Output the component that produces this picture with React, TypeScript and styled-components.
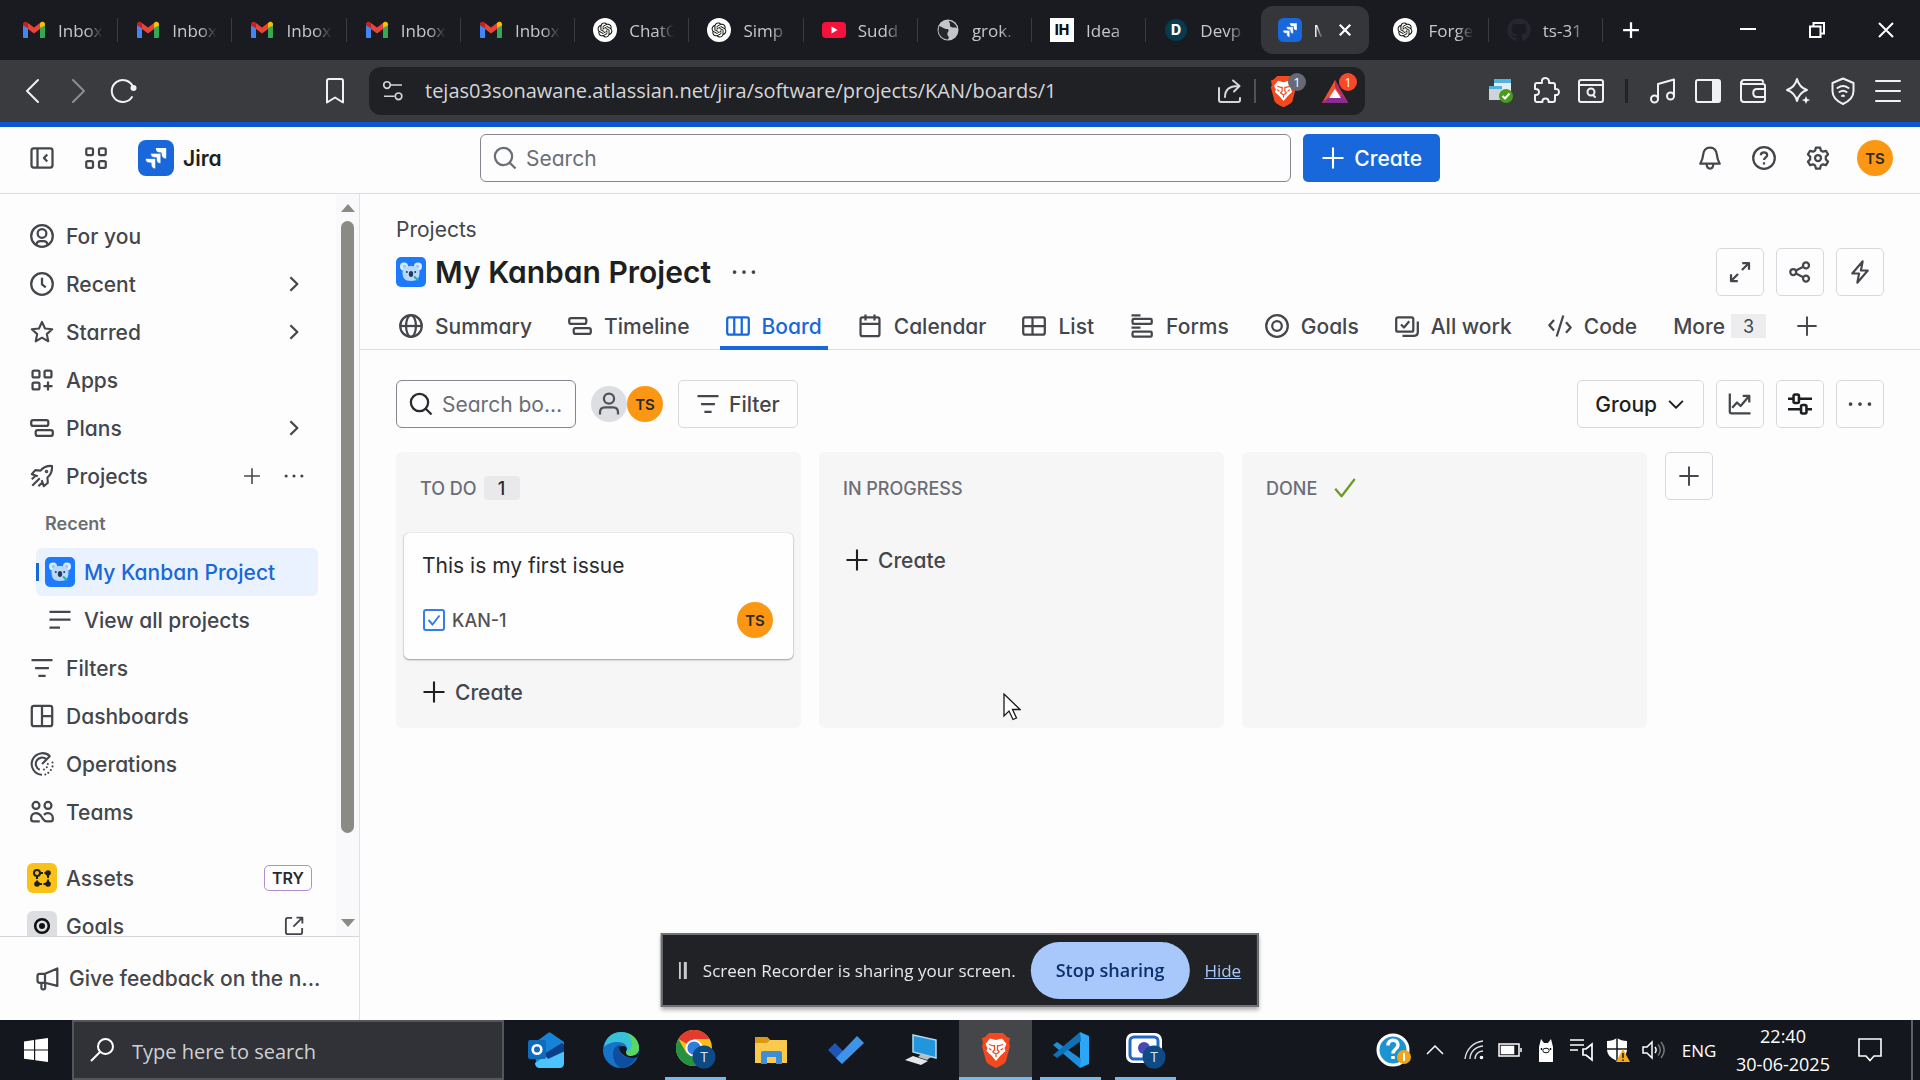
import React from "react";
import styled, { createGlobalStyle, css } from "styled-components";
import { RiOpenaiFill } from "react-icons/ri";
import { FaGithub } from "react-icons/fa";

const jiraFont = `Inter, "Liberation Sans", sans-serif`;
const osFont = `"Open Sans", "Noto Sans", sans-serif`;

const Global = createGlobalStyle`
  *, *::before, *::after { box-sizing: border-box; }
  html, body { margin: 0; padding: 0; }
  body { font-family: ${jiraFont}; font-feature-settings: "cv11"; color: #292a2e; background: #fdfdfe; }
  button, input { font: inherit; font-feature-settings: inherit; color: inherit; }
  button { border: 0; padding: 0; background: none; cursor: pointer; }
  h1, h2, h3, p { margin: 0; }
  a { color: inherit; text-decoration: none; }
  svg { display: block; flex: none; }
`;

/* ---------- icons ---------- */

type IconProps = { size?: number; sw?: number; children: React.ReactNode };
const Icon = ({ size = 24, sw = 1.5, children }: IconProps) => (
  <svg width={size} height={size} viewBox="0 0 16 16" fill="none" stroke="currentColor" strokeWidth={sw} strokeLinejoin="round" aria-hidden="true">
    {children}
  </svg>
);

const PlusIcon = ({ size = 24, sw = 1.4 }) => <Icon size={size} sw={sw}><path d="M8 1v14M1 8h14" /></Icon>;
const DotsIcon = ({ size = 24 }) => (
  <Icon size={size}><g fill="currentColor" stroke="none"><circle cx="1.7" cy="8" r="1.25" /><circle cx="8" cy="8" r="1.25" /><circle cx="14.3" cy="8" r="1.25" /></g></Icon>
);
const SearchIcon = ({ size = 24 }) => <Icon size={size}><circle cx="7" cy="7" r="5.75" /><path d="M11 11l4 4" /></Icon>;
const ChevronRight = () => <Icon size={24}><path d="M5.6 3.5L10.2 8l-4.6 4.5" /></Icon>;
const ChevronDown = () => <Icon size={20}><path d="M2.5 5.5L8 11l5.5-5.5" /></Icon>;
const PersonCircle = () => <Icon><circle cx="8" cy="8" r="7.2" /><circle cx="8" cy="6.3" r="2.9" /><path d="M4.2 14c.2-1.7 1.3-2.6 2.8-2.6h2c1.5 0 2.6.9 2.8 2.6" /></Icon>;
const ClockIcon = () => <Icon><circle cx="8" cy="8" r="7.2" /><path d="M8 3.8V8.300l2.500 1.900" /></Icon>;
const StarIcon = () => <Icon sw={1.4}><path d="M8 1.3l2 4.4 4.8.5-3.6 3.2 1 4.8L8 11.8l-4.200 2.400 1-4.800L1.200 6.200 6 5.700z" /></Icon>;
const AppsIcon = () => <Icon><rect x="1.7" y="1.7" width="4.6" height="4.6" rx="1" /><rect x="9.7" y="1.7" width="4.6" height="4.6" rx="1" /><rect x="1.7" y="9.7" width="4.6" height="4.6" rx="1" /><path d="M12 9v6M9 12h6" /></Icon>;
const SwitcherIcon = () => <Icon><rect x="1.5" y="1.5" width="4.5" height="4.5" rx="1" /><rect x="10" y="1.5" width="4.5" height="4.5" rx="1" /><rect x="1.5" y="10" width="4.5" height="4.5" rx="1" /><rect x="10" y="10" width="4.5" height="4.5" rx="1" /></Icon>;
const TimelineIcon = () => <Icon><rect x=".8" y="2.7" width="11.4" height="3.9" rx="1.3" /><rect x="3.8" y="9.4" width="11.4" height="3.9" rx="1.3" /></Icon>;
const RocketIcon = () => <Icon sw={1.4}><path d="M5.2 8.2L1.2 6.800l2.300-2.700 3.500.3C9 2 11.500 1.100 14.700 1.300c.2 3.200-.7 5.700-3.100 7.700l.3 3.500-2.700 2.300-1.400-4M1.500 14.500l5-5M1.200 10.200l2.200-2M5.600 14.800l2.200-2.200" /><circle cx="11" cy="5" r=".5" /></Icon>;
const ListLinesIcon = () => <Icon><path d="M1 2.5h14M1 7.8h14M1 13h7" /></Icon>;
const FilterIcon = () => <Icon><path d="M1 2.8h14M3.4 8h9.2M5.6 13.2h4.8" /></Icon>;
const DashIcon = () => <Icon><rect x="1.2" y="1.2" width="13.6" height="13.6" rx="1.5" /><path d="M8 1.2v13.6M8 8h6.8" /></Icon>;
const OpsIcon = () => (
  <Icon sw={1.4}>
    <path d="M13.300 2.800A7.200 7.200 0 1 0 8 15.200M11 4.900a4.200 4.200 0 1 0-4.500 6.900M13.500 2.500L8 8" />
    <g fill="currentColor" stroke="none">
      <circle cx="15" cy="7" r=".7" /><circle cx="15" cy="9.600" r=".7" /><circle cx="13.900" cy="12" r=".7" /><circle cx="12.200" cy="13.900" r=".7" /><circle cx="10.200" cy="15" r=".7" />
      <circle cx="11.900" cy="8" r=".7" /><circle cx="11.200" cy="10.200" r=".7" /><circle cx="9.300" cy="11.700" r=".7" />
    </g>
  </Icon>
);
const TeamsIcon = () => <Icon><circle cx="4" cy="3.6" r="2.3" /><circle cx="12" cy="3.6" r="2.3" /><path d="M6.500 14.200H2.300C1.300 14.200.8 13.700.8 13v-1C.8 9.900 2.300 8.800 4 8.800s2.700.8 3.600 2.200l1 1.600c.7 1.100 1.400 1.600 2.600 1.600h2.500c1 0 1.500-.5 1.500-1.200v-1c0-2-1.500-3.200-3.200-3.200-1.200 0-2 .4-2.700 1.100" /></Icon>;
const ExternalIcon = () => <Icon size={20}><path d="M6.5 1.5H3c-1 0-1.5.5-1.5 1.5v10c0 1 .5 1.5 1.500 1.500h10c1 0 1.500-.5 1.500-1.500V9.500M10 1.300h4.700V6M14.500 1.500l-7 7" /></Icon>;
const MegaphoneIcon = () => <Icon><path d="M6 4.500L14.200 1v11.600L6 10.500M6 4.500H2.500c-1 0-1.500.5-1.500 1.500v3c0 1 .5 1.500 1.500 1.500H6zM3.600 10.500V14c0 .5.3.9.8.9h.9c.5 0 .8-.4.8-.9v-3.500" /></Icon>;
const SidebarIcon = () => <Icon><rect x="1" y="1.6" width="14" height="12.8" rx="1.5" /><path d="M5 1.6v12.8M11.5 5.700L9.300 8l2.200 2.300" /></Icon>;
const BellIcon = () => <Icon><path d="M8 1c2.700 0 4.300 2 4.500 4.500.2 2.600.7 4 2 6.300h-13c1.300-2.300 1.800-3.700 2-6.300C3.700 3 5.300 1 8 1zM5.800 12c0 2 .9 3 2.200 3s2.200-1 2.200-3" /></Icon>;
const HelpIcon = () => <Icon><circle cx="8" cy="8" r="7.2" /><path d="M5.900 6.200c0-1.300.9-2 2.100-2s2.100.8 2.100 1.900C10.100 7.500 8 7.600 8 9.400M8 10.800v1.500" /></Icon>;
const GearIcon = () => <Icon><path d="M6.600 1h2.800l.5 2 1.400.8 2-.6 1.400 2.400-1.500 1.500v1.800l1.500 1.500-1.400 2.400-2-.6-1.400.8-.5 2H6.600l-.5-2-1.400-.8-2 .6-1.400-2.400 1.500-1.500V7.100L1.300 5.600l1.400-2.400 2 .6L6.100 3z" /><circle cx="8" cy="8" r="2" /></Icon>;
const GlobeIcon = () => <Icon><circle cx="8" cy="8" r="7.2" /><ellipse cx="8" cy="8" rx="3.3" ry="7.2" /><path d="M.8 8h14.4" /></Icon>;
const BoardIcon = () => <Icon><rect x=".8" y="2.2" width="14.4" height="11.6" rx="1.3" /><path d="M5.5 2.2v11.6M10.5 2.2v11.6" /></Icon>;
const CalendarIcon = () => <Icon><rect x="1.7" y="2.2" width="12.6" height="12.6" rx="1.3" /><path d="M1.7 6.6h12.6M5 .3v4M11 .3v4" /></Icon>;
const TableIcon = () => <Icon><rect x=".8" y="2.2" width="14.4" height="11.6" rx="1.3" /><path d="M7 2.2v11.6M.8 8h14.4" /></Icon>;
const FormsIcon = () => <Icon><path d="M1 .9h6M1 9h6" /><rect x="1.7" y="3.3" width="12.8" height="3.3" rx=".8" /><rect x="1.7" y="11.8" width="12.8" height="3.3" rx=".8" /></Icon>;
const TargetIcon = () => <Icon><circle cx="8" cy="8" r="7.2" /><circle cx="8" cy="8" r="3.2" /></Icon>;
const AllWorkIcon = () => <Icon><rect x=".8" y="2.2" width="11.4" height="9.6" rx="1.2" /><path d="M4 7l2 2 3.500-4.200M15.200 5v7.200c0 1.500-.8 2.300-2.300 2.300H5" /></Icon>;
const CodeIcon = () => <Icon><path d="M4 4L.9 7.500 4 11M12 5.500L15.100 9 12 12.500M10.200 1L5.800 15" /></Icon>;
const ExpandIcon = () => <Icon><path d="M9.500 2H14v4.500M14 2L9.300 6.700M6.500 14H2V9.500M2 14l4.700-4.700" /></Icon>;
const ShareIcon = () => <Icon><circle cx="3.5" cy="8" r="2" /><circle cx="12" cy="3.6" r="2" /><circle cx="12" cy="12.4" r="2" /><path d="M5.300 7l4.900-2.500M5.300 9l4.900 2.500" /></Icon>;
const BoltIcon = () => <Icon sw={1.4}><path d="M9.800.8L2.800 9h4.600l-1.200 6.200L13.200 7H8.600z" /></Icon>;
const ChartIcon = () => <Icon><path d="M1.200 1v12c0 .8.4 1.200 1.200 1.200H15M2.800 10.500L6 7l2.400 2.300L13.800 3M9.800 2.600h4.400V7" /></Icon>;
const SlidersIcon = () => <Icon sw={1.7}><path d="M0 4.500h3.500M8 4.500h8M0 11.500h8M12.500 11.500H16" /><rect x="3.7" y="1.7" width="3.6" height="5.6" rx="1" /><rect x="8.7" y="8.7" width="3.6" height="5.6" rx="1" /></Icon>;
const CheckIcon = () => <Icon><path d="M1.500 8.500l4.200 5L14.500 2" stroke="#6a9a23" /></Icon>;
const PersonIcon = () => <Icon><circle cx="8" cy="4.4" r="3.4" /><path d="M2 15v-1.500c0-2 1.300-3.300 3.300-3.300h5.400c2 0 3.300 1.300 3.300 3.300V15" /></Icon>;

const JiraLogo = ({ size }: { size: number }) => (
  <svg width={size} height={size} viewBox="0 0 36 36" aria-hidden="true">
    <rect width="36" height="36" rx="8" fill="#1868db" />
    <g fill="#fff">
      <path d="M17.800 8h10.400v10.500c-3 0-4.600-2-4.600-4.500v-1.500h-1.500c-2.500 0-4.300-1.500-4.300-4.500z" />
      <path d="M12.500 13.200h10.400v10.500c-3 0-4.600-2-4.600-4.500v-1.500h-1.500c-2.500 0-4.300-1.500-4.300-4.500z" stroke="#1868db" strokeWidth=".8" />
      <path d="M7.300 18.400h10.400v10.500c-3 0-4.600-2-4.600-4.500v-1.500h-1.500c-2.500 0-4.300-1.500-4.300-4.500z" stroke="#1868db" strokeWidth=".8" />
    </g>
  </svg>
);

const Koala = () => (
  <svg width="30" height="30" viewBox="0 0 30 30" aria-hidden="true">
    <rect width="30" height="30" rx="5" fill="#1d7afc" />
    <circle cx="8" cy="9.500" r="4" fill="#dcebff" /><circle cx="22" cy="9.500" r="4" fill="#dcebff" />
    <circle cx="8.500" cy="9.500" r="1.800" fill="#9cc8ff" /><circle cx="21.500" cy="9.500" r="1.800" fill="#9cc8ff" />
    <path d="M6.500 15c0-4 4-6 8.500-6s8.500 2 8.500 6c0 6-2 9-8.500 9s-8.500-3-8.500-9z" fill="#b9d9fb" />
    <ellipse cx="15" cy="17" rx="2.200" ry="3" fill="#22395c" />
    <circle cx="10.800" cy="15" r="1" fill="#22395c" /><circle cx="19.200" cy="15" r="1" fill="#22395c" />
    <path d="M18 19.500l4.500 4" stroke="#1fb49a" strokeWidth="2" />
  </svg>
);

const Gmail = () => (
  <svg width="24" height="24" viewBox="0 0 24 24" aria-hidden="true">
    <path d="M1 5.500V19c0 .7.5 1 1 1h4V10z" fill="#4285f4" />
    <path d="M23 5.500V19c0 .7-.5 1-1 1h-4V10z" fill="#34a853" />
    <path d="M18 10V5l1.200-.9C21 3 23 4 23 6v1.500z" fill="#fbbc04" />
    <path d="M6 10V5L4.800 4.100C3 3 1 4 1 6v1.500z" fill="#c5221f" />
    <path d="M6 5l6 4.500L18 5v6l-6 4.500L6 11z" fill="#ea4335" />
  </svg>
);
const GptIcon = () => (
  <svg width="24" height="24" viewBox="0 0 24 24" aria-hidden="true">
    <circle cx="12" cy="12" r="12" fill="#fff" />
    <RiOpenaiFill x="3" y="3" size={18} color="#111" />
  </svg>
);
const YouTube = () => (
  <svg width="24" height="24" viewBox="0 0 24 24" aria-hidden="true"><rect y="4" width="24" height="16" rx="4" fill="#f5123c" /><path d="M9.500 8.500l6 3.500-6 3.500z" fill="#fff" /></svg>
);
const WorldIcon = () => (
  <svg width="24" height="24" viewBox="0 0 24 24" aria-hidden="true">
    <circle cx="12" cy="12" r="10.500" fill="#c3c5c8" />
    <path d="M3 8c4 1 5 3 8 3 2 0 2 2 1 3s-1 4 1 5l-1 2.500C6 21 3 17 2.500 13zM13 4c2 2 0 4 2 5s4 0 6 1c-1-4-4-6.500-8-7z" fill="#26272b" />
  </svg>
);
const LetterIcon = ({ round = false, bg, fg, children }: { round?: boolean; bg: string; fg: string; children: string }) => (
  <svg width="24" height="24" viewBox="0 0 24 24" aria-hidden="true">
    {round ? <circle cx="12" cy="12" r="11" fill={bg} /> : <rect width="24" height="24" fill={bg} />}
    <text x="12" y="17" textAnchor="middle" fontFamily="Inter, sans-serif" fontWeight="800" fontSize="14" fill={fg}>{children}</text>
  </svg>
);
const BraveIcon = ({ size = 28 }) => (
  <svg width={size} height={size * 1.2} viewBox="0 0 30 36" aria-hidden="true">
    <path d="M8 1h14l4 4 3 1-1 5 1 3-4 15c-1 3-7 5.500-10 7-3-1.500-9-4-10-7L1 14l1-3-1-5 3-1z" fill="#f4491f" />
    <path d="M9 6.500l6 1.500 6-1.500 4.500 5.500-2 4 1 3-5 4.500L15 29l-4.500-5.500-5-4.500 1-3-2-4z" fill="#fff" />
    <path d="M8 12.500l5 1.500M22 12.500L17 14M13.500 13v5l-2 2M16.500 13v5l2 2M11.500 20l3.500 2 3.500-2M15 22v3M8 16.500l2.500 1.500M22 16.500L19.500 18" stroke="#f4491f" strokeWidth="1.300" fill="none" />
  </svg>
);

/* ---------- browser chrome ---------- */

const Desktop = styled.div`
  display: flex;
  flex-direction: column;
  height: 100vh;
  min-width: 1280px;
  overflow: hidden;
`;
const TabStrip = styled.div`
  flex: none;
  display: flex;
  align-items: center;
  height: 60px;
  padding-left: 4px;
  background: #191b20;
  color: #c6c8cc;
  font-family: ${osFont};
  font-size: 17px;
`;
const Tabs = styled.div`
  flex: 1;
  min-width: 0;
  display: flex;
`;
const Tab = styled.button<{ $active?: boolean; $bare?: boolean }>`
  flex: 1 1 0;
  min-width: 0;
  height: 48px;
  display: flex;
  align-items: center;
  gap: 12px;
  padding: 0 14px 0 18px;
  position: relative;
  ${(p) => !p.$bare && !p.$active && css`
    &::after {
      content: "";
      position: absolute;
      right: 0;
      top: 12px;
      height: 24px;
      width: 1px;
      background: #3a3c40;
    }
  `}
  ${(p) => p.$active && css`
    flex: 0 0 108px;
    background: #34363a;
    border-radius: 12px;
    color: #fff;
    margin-right: 6px;
    padding: 0 17px;
  `}
`;
const TabTitle = styled.span<{ $short?: boolean }>`
  flex: 1;
  min-width: 0;
  text-align: left;
  white-space: nowrap;
  overflow: hidden;
  mask-image: linear-gradient(90deg, #000 ${(p) => (p.$short ? "20%" : "60%")}, transparent ${(p) => (p.$short ? "70%" : "98%")});
`;
const WindowControls = styled.div`
  flex: none;
  width: 317px;
  display: flex;
  align-items: center;
  color: #fff;
`;
const WinBtn = styled.button`
  width: 69px;
  height: 48px;
  display: grid;
  place-items: center;
`;
const NewTab = styled(WinBtn)`
  width: 56px;
  margin-right: auto;
`;
const Toolbar = styled.div`
  flex: none;
  height: 62px;
  display: flex;
  align-items: center;
  background: #393b3e;
  color: #f0f1f2;
`;
const NavGroup = styled.div`
  flex: 0 0 369px;
  display: flex;
  align-items: center;
  gap: 12px;
  padding: 0 18px 0 16px;
`;
const ToolBtn = styled.button<{ $dim?: boolean; $end?: boolean }>`
  width: 33px;
  height: 36px;
  display: grid;
  place-items: center;
  opacity: ${(p) => (p.$dim ? 0.45 : 1)};
  margin-left: ${(p) => (p.$end ? "auto" : "0")};
`;
const AddressBar = styled.div`
  flex: 1;
  min-width: 0;
  height: 48px;
  display: flex;
  align-items: center;
  padding: 0 8px 0 12px;
  border-radius: 12px;
  background: #1f2125;
  color: #d5d6d9;
`;
const Url = styled.input`
  flex: 1;
  min-width: 0;
  margin-left: 20px;
  padding: 0 0 2px;
  border: 0;
  outline: 0;
  background: none;
  font-family: ${osFont};
  font-size: 20px;
`;
const BarRule = styled.span`
  width: 2px;
  height: 24px;
  margin: 0 14px 0 8px;
  background: #505257;
`;
const Badged = styled.button`
  position: relative;
  width: 36px;
  height: 36px;
  display: grid;
  place-items: center start;
  & + & { margin-left: 15px; }
`;
const Count = styled.span<{ $hot?: boolean }>`
  position: absolute;
  top: 0;
  right: 0;
  min-width: 18px;
  height: 18px;
  border-radius: 9px;
  background: ${(p) => (p.$hot ? "#f9472a" : "#656a75")};
  color: #fff;
  font: 13px/18px ${osFont};
  text-align: center;
`;
const Extensions = styled.div`
  flex: 0 0 555px;
  display: flex;
  justify-content: flex-end;
  align-items: center;
  gap: 12px;
  padding-right: 16px;
`;
const ExtRule = styled.span`
  width: 3px;
  height: 24px;
  margin: 0 6px;
  background: #222327;
`;

/* ---------- jira ---------- */

const Page = styled.div`
  flex: 1;
  min-height: 0;
  display: flex;
  flex-direction: column;
  border-top: 5px solid #0b57d0;
  background: #fdfdfe;
`;
const TopNav = styled.header`
  flex: none;
  height: 67px;
  display: grid;
  grid-template-columns: 1fr minmax(0, 960px) 1fr;
  align-items: center;
  padding-bottom: 4px;
  border-bottom: 1px solid #dcdde3;
  color: #44464b;
`;
const NavLeft = styled.div`
  display: flex;
  align-items: center;
  gap: 30px;
  padding-left: 30px;
`;
const Brand = styled.a`
  display: flex;
  align-items: center;
  gap: 9px;
  color: #1e1f21;
  font-size: 21px;
  font-weight: 600;
`;
const NavCenter = styled.div`
  display: flex;
  gap: 12px;
`;
const SearchBox = styled.label<{ $small?: boolean }>`
  flex: ${(p) => (p.$small ? "none" : 1)};
  width: ${(p) => (p.$small ? "180px" : "auto")};
  height: 48px;
  display: flex;
  align-items: center;
  gap: 9px;
  padding: 0 12px;
  border: 1px solid #85878e;
  border-radius: 6px;
  color: ${(p) => (p.$small ? "#292a2e" : "#6b6e76")};
  font-size: 21px;
  input {
    flex: 1;
    min-width: 0;
    border: 0;
    outline: 0;
    padding: 0;
    background: none;
    text-overflow: ellipsis;
  }
  input::placeholder { color: #6b6e76; opacity: 1; }
`;
const CreateBtn = styled.button`
  flex: none;
  height: 48px;
  display: flex;
  align-items: center;
  gap: 9px;
  padding: 0 18px;
  border-radius: 5px;
  background: #1868db;
  color: #fff;
  font-size: 21px;
  font-weight: 500;
`;
const NavRight = styled.div`
  display: flex;
  justify-content: flex-end;
  align-items: center;
  gap: 24px;
  padding-right: 27px;
`;
const RoundBtn = styled.button`
  width: 30px;
  height: 30px;
  display: grid;
  place-items: center;
`;
const Avatar = styled.span<{ $grey?: boolean }>`
  width: 36px;
  height: 36px;
  display: grid;
  place-items: center;
  border-radius: 50%;
  background: ${(p) => (p.$grey ? "#dddee1" : "#fb9712")};
  color: ${(p) => (p.$grey ? "#505258" : "#292a2e")};
  font-size: 15px;
  font-weight: 600;
`;
const Body = styled.div`
  flex: 1;
  min-height: 0;
  display: flex;
`;
const Sidebar = styled.nav`
  flex: 0 0 360px;
  display: flex;
  flex-direction: column;
  border-right: 1px solid #e0e1e6;
  color: #44464b;
  font-size: 21px;
  font-weight: 500;
`;
const Scroller = styled.div`
  flex: 1;
  min-height: 0;
  display: flex;
`;
const NavList = styled.div`
  flex: 1;
  min-width: 0;
  overflow: hidden;
  padding: 18px 18px 0 27px;
`;
const NavItem = styled.a<{ $gap?: boolean }>`
  height: 48px;
  margin-top: ${(p) => (p.$gap ? "18px" : "0")};
  display: flex;
  align-items: center;
  gap: 9px;
`;
const IconSlot = styled.span`
  width: 30px;
  height: 30px;
  display: grid;
  place-items: center;
`;
const Trailing = styled.span`
  margin-left: auto;
  margin-right: 12px;
  display: grid;
  grid-auto-flow: column;
  grid-auto-columns: 24px;
  place-items: center;
  gap: 18px;
`;
const SubHead = styled.h2`
  height: 48px;
  padding-left: 18px;
  font-size: 18px;
  line-height: 48px;
  font-weight: 600;
  color: #6b6e76;
`;
const SubItem = styled.a<{ $selected?: boolean }>`
  height: 48px;
  margin-left: 9px;
  display: flex;
  align-items: center;
  gap: 9px;
  padding-left: 9px;
  border-radius: 6px;
  ${(p) => p.$selected && css`
    padding-left: 0;
    background: #e9f2fe;
    color: #1868db;
    &::before {
      content: "";
      width: 3px;
      height: 18px;
      margin-right: -3px;
      background: #1868db;
    }
  `}
`;
const TryTag = styled.span`
  margin-left: auto;
  margin-right: 6px;
  width: 48px;
  height: 26px;
  display: grid;
  place-items: center;
  border: 1px solid #b48ccf;
  border-radius: 5px;
  color: #292a2e;
  font-size: 16px;
  font-weight: 600;
`;
const ScrollTrack = styled.div`
  flex: none;
  width: 23px;
  display: flex;
  flex-direction: column;
  align-items: center;
  background: #f9f9fb;
`;
const ScrollArrow = styled.span<{ $down?: boolean }>`
  flex: none;
  height: 27px;
  display: grid;
  place-items: center;
  &::before {
    content: "";
    border: 7px solid transparent;
    border-top-width: ${(p) => (p.$down ? "8px" : "0")};
    border-bottom-width: ${(p) => (p.$down ? "0" : "8px")};
    border-top-color: #8b8b86;
    border-bottom-color: #8b8b86;
  }
`;
const ScrollLane = styled.div`
  flex: 1;
  width: 13px;
`;
const Thumb = styled.div`
  height: 89%;
  border-radius: 7px;
  background: #8b8b86;
`;
const Feedback = styled.a`
  flex: none;
  height: 84px;
  display: flex;
  align-items: center;
  gap: 9px;
  padding: 0 36px;
  border-top: 1px solid #d5d6da;
  white-space: nowrap;
`;

const Main = styled.main`
  flex: 1;
  min-width: 0;
  color: #44464b;
  font-size: 21px;
`;
const Crumb = styled.a`
  display: block;
  padding: 24px 36px 0;
  line-height: 24px;
`;
const TitleRow = styled.div`
  height: 48px;
  margin-top: 6px;
  display: flex;
  align-items: center;
  gap: 9px;
  padding: 0 36px;
`;
const Title = styled.h1`
  margin-right: 12px;
  font-size: 30px;
  line-height: 36px;
  font-weight: 600;
  color: #1e1f21;
`;
const Actions = styled.div`
  margin-left: auto;
  display: flex;
  gap: 12px;
`;
const BoxBtn = styled.button<{ $dark?: boolean; $wide?: boolean }>`
  height: 48px;
  min-width: 48px;
  padding: ${(p) => (p.$wide ? "0 17px" : "0")};
  display: flex;
  justify-content: center;
  align-items: center;
  gap: 9px;
  border: 1px solid #d8d9de;
  border-radius: 5px;
  color: ${(p) => (p.$dark ? "#1e1f21" : "#44464b")};
  font-weight: 500;
`;
const ViewTabs = styled.div`
  height: 54px;
  display: flex;
  gap: 24px;
  padding: 0 33px;
  border-bottom: 1px solid #dcdde3;
`;
const ViewTab = styled.a<{ $active?: boolean }>`
  height: 54px;
  padding: 10px 6px 0;
  display: flex;
  align-items: center;
  gap: 12px;
  font-weight: 500;
  white-space: nowrap;
  border-bottom: 4px solid ${(p) => (p.$active ? "#1868db" : "transparent")};
  color: ${(p) => (p.$active ? "#1868db" : "inherit")};
`;
const MoreCount = styled.span`
  width: 35px;
  height: 24px;
  margin: 0 -6px;
  display: grid;
  place-items: center;
  background: #ededef;
  font-size: 18px;
  font-weight: 400;
`;
const BoardBar = styled.div`
  display: flex;
  align-items: center;
  padding: 30px 36px 24px;
`;
const People = styled.div`
  display: flex;
  margin: 0 15px;
`;
const Columns = styled.div`
  display: flex;
  align-items: flex-start;
  gap: 18px;
  padding: 0 36px;
`;
const Column = styled.section`
  flex: 0 1 405px;
  min-height: 276px;
  padding: 0 8px 6px;
  border-radius: 6px;
  background: #f6f6f7;
`;
const ColumnHead = styled.h3`
  height: 72px;
  display: flex;
  align-items: center;
  gap: 7px;
  padding-left: 16px;
  font-size: 18px;
  font-weight: 500;
  color: #6b6e76;
`;
const Pill = styled.span`
  width: 36px;
  height: 24px;
  display: grid;
  place-items: center;
  border-radius: 4px;
  background: #e9e9eb;
  color: #292a2e;
`;
const CheckSlot = styled.span`
  margin-left: 9px;
`;
const Card = styled.article`
  height: 126px;
  margin-top: 9px;
  padding: 20px 20px 21px 18px;
  display: flex;
  flex-direction: column;
  justify-content: space-between;
  border-radius: 5px;
  background: #fefefe;
  box-shadow: 0 1px 2px rgba(30, 31, 33, 0.4), 0 0 1px rgba(30, 31, 33, 0.3);
  color: #292a2e;
`;
const CardFoot = styled.div`
  display: flex;
  align-items: center;
  gap: 6px;
  color: #505258;
  font-size: 18px;
  font-weight: 500;
`;
const CardAvatar = styled.span`
  margin-left: auto;
`;
const AddCard = styled.button<{ $first?: boolean }>`
  height: 48px;
  margin-top: ${(p) => (p.$first ? "12px" : "9px")};
  display: flex;
  align-items: center;
  gap: 9px;
  padding-left: 18px;
  font-weight: 500;
  svg { color: #1e1f21; }
`;

/* ---------- overlays ---------- */

const ShareBar = styled.div`
  position: fixed;
  left: 50%;
  bottom: 73px;
  transform: translateX(-50%);
  height: 74px;
  display: flex;
  align-items: center;
  gap: 15px;
  padding: 0 16px;
  border: 2px solid #6f7176;
  background: #202226;
  box-shadow: 0 3px 4px rgba(0, 0, 0, 0.3);
  color: #e8e9ea;
  font-family: ${osFont};
  font-size: 17px;
  white-space: nowrap;
`;
const StopBtn = styled.button`
  height: 57px;
  padding: 0 25px;
  border-radius: 29px;
  background: #a8c7fa;
  color: #0b3070;
  font-size: 18px;
  font-weight: 600;
`;
const HideLink = styled.a`
  color: #a8c7fa;
  text-decoration: underline;
`;
const Pointer = styled.div`
  position: fixed;
  left: 1003px;
  top: 693px;
`;

/* ---------- taskbar ---------- */

const Taskbar = styled.footer`
  flex: none;
  height: 60px;
  display: flex;
  align-items: center;
  background: #14171d;
  color: #fff;
  font-family: ${osFont};
`;
const StartBtn = styled.button`
  width: 72px;
  height: 60px;
  display: grid;
  place-items: center;
`;
const TaskSearch = styled.label`
  flex: 0 1 432px;
  height: 60px;
  display: flex;
  align-items: center;
  gap: 18px;
  padding: 0 16px;
  border: 2px solid #55565a;
  background: #303237;
  font-size: 20px;
  input { flex: 1; min-width: 0; padding: 2px 0 0; border: 0; outline: 0; background: none; }
  input::placeholder { color: #cfd0d2; opacity: 1; }
`;
const Apps = styled.div`
  display: flex;
  gap: 2px;
  padding-left: 5px;
`;
const AppBtn = styled.button<{ $open?: boolean; $current?: boolean }>`
  width: 73px;
  height: 60px;
  display: grid;
  place-items: center;
  position: relative;
  background: ${(p) => (p.$current ? "#44464a" : "none")};
  ${(p) => (p.$open || p.$current) && css`
    &::after {
      content: "";
      position: absolute;
      bottom: 0;
      left: ${p.$current ? "0" : "6px"};
      right: ${p.$current ? "0" : "6px"};
      height: 3px;
      background: #76b9ed;
    }
  `}
`;
const Tray = styled.div`
  margin-left: auto;
  display: flex;
  align-items: center;
`;
const TrayBtn = styled.button<{ $w?: number }>`
  width: ${(p) => p.$w ?? 36}px;
  height: 60px;
  display: grid;
  place-items: center;
`;
const Lang = styled.button`
  width: 54px;
  font-size: 17px;
`;
const Clock = styled.div`
  width: 114px;
  font-size: 18px;
  line-height: 28px;
  text-align: center;
`;
const Peek = styled.span`
  width: 2px;
  height: 60px;
  margin: 0 7px 0 11px;
  background: #5d5f63;
`;

const tabsBefore: [React.ReactNode, string][] = [
  [<Gmail />, "Inbox"], [<Gmail />, "Inbox"], [<Gmail />, "Inbox"], [<Gmail />, "Inbox"], [<Gmail />, "Inbox"],
  [<GptIcon />, "ChatG"], [<GptIcon />, "Simp"], [<YouTube />, "Sudd"], [<WorldIcon />, "grok."],
  [<LetterIcon bg="#fff" fg="#111">IH</LetterIcon>, "Idea"],
  [<LetterIcon round bg="#063b50" fg="#fff">D</LetterIcon>, "Devp"],
];

const T = ({ children }: { children: React.ReactNode }) => (
  <svg width="28" height="28" viewBox="0 0 28 28" fill="none" stroke="currentColor" strokeWidth="2" strokeLinejoin="round" strokeLinecap="round" aria-hidden="true">{children}</svg>
);

const UserBadge = ({ x, y }: { x: number; y: number }) => (
  <g><circle cx={x} cy={y} r="11.500" fill="#0d4a86" /><text x={x} y={y + 5} textAnchor="middle" fontFamily="Open Sans, sans-serif" fontSize="14" fill="#d6e6f5">T</text></g>
);

function BrowserTop() {
  return (
    <>
      <TabStrip>
        <Tabs role="tablist">
          {tabsBefore.map(([icon, t], i) => (
            <Tab key={i} role="tab" $bare={i === 10}>{icon}<TabTitle>{t}</TabTitle></Tab>
          ))}
          <Tab role="tab" $active aria-selected>
            <JiraLogo size={24} /><TabTitle $short>M</TabTitle>
            <svg width="14" height="14" viewBox="0 0 16 16" stroke="#fff" strokeWidth="2.600" aria-hidden="true"><path d="M2 2l12 12M14 2L2 14" /></svg>
          </Tab>
          <Tab role="tab"><GptIcon /><TabTitle>Forge</TabTitle></Tab>
          <Tab role="tab"><FaGithub size={24} color="#25282e" /><TabTitle>ts-31</TabTitle></Tab>
        </Tabs>
        <WindowControls>
          <NewTab aria-label="New tab"><PlusIcon size={18} sw={2} /></NewTab>
          <WinBtn aria-label="Minimize"><svg width="16" height="16" stroke="#fff" strokeWidth="2"><path d="M0 7h16" /></svg></WinBtn>
          <WinBtn aria-label="Restore"><svg width="16" height="16" fill="none" stroke="#fff" strokeWidth="2"><path d="M1 4.500h10.500V15H1zM4.500 4V1H15v10.500h-3" /></svg></WinBtn>
          <WinBtn aria-label="Close"><svg width="16" height="16" stroke="#fff" strokeWidth="2"><path d="M1 1l14 14M15 1L1 15" /></svg></WinBtn>
        </WindowControls>
      </TabStrip>
      <Toolbar>
        <NavGroup>
          <ToolBtn aria-label="Back"><T><path d="M19 3L8 14l11 11" /></T></ToolBtn>
          <ToolBtn $dim aria-label="Forward"><T><path d="M9 3l11 11L9 25" /></T></ToolBtn>
          <ToolBtn aria-label="Reload"><T><path d="M23 20a11 11 0 1 1 1-10" /><circle cx="24.500" cy="11" r="3" fill="currentColor" stroke="none" /></T></ToolBtn>
          <ToolBtn $end aria-label="Bookmark"><T><path d="M6 4c0-1 .7-2 2-2h12c1.300 0 2 1 2 2v21.500l-8-5-8 5z" /></T></ToolBtn>
        </NavGroup>
        <AddressBar>
          <Icon size={24} sw={1.1}><circle cx="4" cy="4" r="2.200" /><path d="M6.500 4H14M2 11.500h7" /><circle cx="11.700" cy="11.500" r="2.200" /></Icon>
          <Url aria-label="Address" defaultValue="tejas03sonawane.atlassian.net/jira/software/projects/KAN/boards/1" />
          <ToolBtn aria-label="Share page"><T><path d="M3 11v12c0 1.500.8 2 2 2h17c1.300 0 2-.8 2-2v-2M9 20c0-7 4-11 13-11M17 3.500L23.500 9 18 14.500" /></T></ToolBtn>
          <BarRule />
          <Badged aria-label="Brave Shields"><BraveIcon size={27} /><Count>1</Count></Badged>
          <Badged aria-label="Brave Rewards">
            <svg width="32" height="28" viewBox="0 0 32 28" aria-hidden="true"><path d="M14 3L1 26h26z" fill="#f4512c" /><path d="M1 26h26l-6-7H9z" fill="#8a2b93" /><path d="M14 3l13 23-6-6-7-10z" fill="#b32a6a" /><path d="M14 12l6 9H8z" fill="#fff" /></svg>
            <Count $hot>1</Count>
          </Badged>
        </AddressBar>
        <Extensions>
          <ToolBtn aria-label="Extension">
            <svg width="28" height="28" viewBox="0 0 28 28" aria-hidden="true"><rect x="7" y="2" width="17" height="17" fill="#e6edf1" /><rect x="7" y="2" width="17" height="4" fill="#4fb2e0" /><rect x="2" y="9" width="13" height="14" fill="#cdd5da" /><rect x="2" y="9" width="13" height="3" fill="#4fb2e0" /><circle cx="19" cy="19" r="7" fill="#4a9a1c" /><path d="M15.500 19l2.500 2.500 4.500-5" stroke="#fff" strokeWidth="2" fill="none" /></svg>
          </ToolBtn>
          <ToolBtn aria-label="Extensions"><T><path d="M3 8c0-1 .7-2 2-2h5c-1-4 1.500-5 3.500-5s4 1.500 3.500 5h4c1.300 0 2 .8 2 2v4c2.500-.5 4 1 4 3s-1.500 3.500-4 3v5c0 1.300-.8 2-2 2h-4.500c.5-2-.8-3.500-3-3.500s-3.500 1.500-3 3.500H5c-1.300 0-2-.7-2-2v-5c3 .3 4-1 4-3s-1.500-3.300-4-3z" /></T></ToolBtn>
          <ToolBtn aria-label="Find in page"><T><rect x="2" y="3" width="24" height="22" rx="2" /><path d="M2 8h24M18 20l-2-2" /><circle cx="14" cy="15" r="3.500" /></T></ToolBtn>
          <ExtRule />
          <ToolBtn aria-label="Music"><T><circle cx="5.500" cy="22" r="3.500" /><circle cx="21.500" cy="19" r="3.500" /><path d="M9 22V7l16-4.500V19" /></T></ToolBtn>
          <ToolBtn aria-label="Side panel"><T><rect x="2" y="3" width="24" height="22" rx="2" /><path d="M19 4h6v20h-6z" fill="currentColor" /></T></ToolBtn>
          <ToolBtn aria-label="Wallet"><T><path d="M26 12V9c0-1-1-2-2-2H4c-2 0-2-4 1-4h17c1.300 0 2 .7 2 2M2 5v17c0 2 1 3 3 3h19c1.300 0 2-1 2-2v-3M18 12h8v8h-8c-5 0-5-8 0-8z" /></T></ToolBtn>
          <ToolBtn aria-label="Leo AI"><T><path d="M13 2c1.500 6 4 9 10 11-6 2-8.500 5-10 11-1.500-6-4-9-10-11 6-2 8.500-5 10-11z" /><path d="M22 19l1.200 3 3 1-3 1.200L22 27l-1.200-2.800-3-1.200 3-1z" fill="currentColor" stroke="none" /></T></ToolBtn>
          <ToolBtn aria-label="VPN"><T><path d="M14 1.500L24.500 6v8c0 6-4 10-10.500 13C7.500 24 3.500 20 3.500 14V6zM8.500 11c3.500-2.500 7.500-2.500 11 0M10.500 15c2-1.500 5-1.500 7 0M13 19c.7-.5 1.300-.5 2 0" /></T></ToolBtn>
          <ToolBtn aria-label="Menu"><T><path d="M2 4h24M2 14h24M2 24h24" /></T></ToolBtn>
        </Extensions>
      </Toolbar>
    </>
  );
}

function JiraHeader() {
  return (
    <TopNav>
      <NavLeft>
        <button aria-label="Collapse sidebar"><SidebarIcon /></button>
        <button aria-label="Switch sites or apps"><SwitcherIcon /></button>
        <Brand href="#"><JiraLogo size={36} />Jira</Brand>
      </NavLeft>
      <NavCenter>
        <SearchBox><SearchIcon /><input aria-label="Search" placeholder="Search" /></SearchBox>
        <CreateBtn><PlusIcon />Create</CreateBtn>
      </NavCenter>
      <NavRight>
        <RoundBtn aria-label="Notifications"><BellIcon /></RoundBtn>
        <RoundBtn aria-label="Help"><HelpIcon /></RoundBtn>
        <RoundBtn aria-label="Settings"><GearIcon /></RoundBtn>
        <Avatar>TS</Avatar>
      </NavRight>
    </TopNav>
  );
}

const Item = ({ icon, label, chevron, gap, children }: { icon: React.ReactNode; label: string; chevron?: boolean; gap?: boolean; children?: React.ReactNode }) => (
  <NavItem href="#" $gap={gap}>
    <IconSlot>{icon}</IconSlot>{label}
    {chevron && <Trailing><ChevronRight /></Trailing>}
    {children}
  </NavItem>
);

function SideNav() {
  return (
    <Sidebar>
      <Scroller>
        <NavList>
          <Item icon={<PersonCircle />} label="For you" />
          <Item icon={<ClockIcon />} label="Recent" chevron />
          <Item icon={<StarIcon />} label="Starred" chevron />
          <Item icon={<AppsIcon />} label="Apps" />
          <Item icon={<TimelineIcon />} label="Plans" chevron />
          <Item icon={<RocketIcon />} label="Projects"><Trailing><PlusIcon size={18} /><DotsIcon size={20} /></Trailing></Item>
          <SubHead>Recent</SubHead>
          <SubItem href="#" $selected><Koala />My Kanban Project</SubItem>
          <SubItem href="#"><IconSlot><ListLinesIcon /></IconSlot>View all projects</SubItem>
          <Item icon={<FilterIcon />} label="Filters" />
          <Item icon={<DashIcon />} label="Dashboards" />
          <Item icon={<OpsIcon />} label="Operations" />
          <Item icon={<TeamsIcon />} label="Teams" />
          <Item gap label="Assets" icon={
            <svg width="30" height="30" viewBox="0 0 30 30" aria-hidden="true"><rect width="30" height="30" rx="6" fill="#fbc116" /><g stroke="#1e1f21" strokeWidth="2" fill="none"><circle cx="10" cy="10" r="3" /><path d="M13 10h6M10 13v7M21 12v7M12 21h7" strokeDasharray="3 1.500" /></g><g fill="#1e1f21"><circle cx="21" cy="10" r="2.800" /><circle cx="10" cy="21" r="2.800" /><circle cx="21" cy="21" r="2.800" /></g></svg>
          }><TryTag>TRY</TryTag></Item>
          <Item label="Goals" icon={
            <svg width="30" height="30" viewBox="0 0 30 30" aria-hidden="true"><rect width="30" height="30" rx="6" fill="#dddee1" /><circle cx="15" cy="15" r="6.800" fill="none" stroke="#111" strokeWidth="2.600" /><circle cx="15" cy="15" r="3" fill="#111" /></svg>
          }><Trailing><ExternalIcon /></Trailing></Item>
        </NavList>
        <ScrollTrack>
          <ScrollArrow />
          <ScrollLane><Thumb /></ScrollLane>
          <ScrollArrow $down />
        </ScrollTrack>
      </Scroller>
      <Feedback href="#"><MegaphoneIcon />Give feedback on the n...</Feedback>
    </Sidebar>
  );
}

const views: [React.ReactNode, string][] = [
  [<GlobeIcon />, "Summary"], [<TimelineIcon />, "Timeline"], [<BoardIcon />, "Board"], [<CalendarIcon />, "Calendar"],
  [<TableIcon />, "List"], [<FormsIcon />, "Forms"], [<TargetIcon />, "Goals"], [<AllWorkIcon />, "All work"], [<CodeIcon />, "Code"],
];

function BoardPage() {
  return (
    <Main>
      <Crumb href="#">Projects</Crumb>
      <TitleRow>
        <Koala />
        <Title>My Kanban Project</Title>
        <button aria-label="Project actions"><DotsIcon size={24} /></button>
        <Actions>
          <BoxBtn aria-label="Full screen"><ExpandIcon /></BoxBtn>
          <BoxBtn aria-label="Share"><ShareIcon /></BoxBtn>
          <BoxBtn aria-label="Automation"><BoltIcon /></BoxBtn>
        </Actions>
      </TitleRow>
      <ViewTabs>
        {views.map(([icon, label]) => (
          <ViewTab key={label} href="#" $active={label === "Board"}>{icon}{label}</ViewTab>
        ))}
        <ViewTab href="#">More<MoreCount>3</MoreCount></ViewTab>
        <ViewTab as="button" aria-label="Add view"><PlusIcon size={22} /></ViewTab>
      </ViewTabs>
      <BoardBar>
        <SearchBox $small><SearchIcon /><input aria-label="Search board" placeholder="Search board" /></SearchBox>
        <People>
          <Avatar $grey><PersonIcon /></Avatar>
          <Avatar>TS</Avatar>
        </People>
        <BoxBtn $wide><FilterIcon />Filter</BoxBtn>
        <Actions>
          <BoxBtn $wide $dark aria-haspopup="menu">Group<ChevronDown /></BoxBtn>
          <BoxBtn aria-label="Insights"><ChartIcon /></BoxBtn>
          <BoxBtn $dark aria-label="View settings"><SlidersIcon /></BoxBtn>
          <BoxBtn aria-label="More actions"><DotsIcon size={24} /></BoxBtn>
        </Actions>
      </BoardBar>
      <Columns>
        <Column>
          <ColumnHead>TO DO<Pill>1</Pill></ColumnHead>
          <Card>
            <p>This is my first issue</p>
            <CardFoot>
              <svg width="24" height="24" viewBox="0 0 24 24" fill="none" stroke="#357de8" strokeWidth="2" aria-hidden="true"><rect x="2" y="2" width="20" height="20" rx="2" /><path d="M6.500 12l4 4.500 7-9" /></svg>
              KAN-1
              <CardAvatar><Avatar>TS</Avatar></CardAvatar>
            </CardFoot>
          </Card>
          <AddCard><PlusIcon />Create</AddCard>
        </Column>
        <Column>
          <ColumnHead>IN PROGRESS</ColumnHead>
          <AddCard $first><PlusIcon />Create</AddCard>
        </Column>
        <Column>
          <ColumnHead>DONE<CheckSlot><CheckIcon /></CheckSlot></ColumnHead>
        </Column>
        <BoxBtn aria-label="Add column"><PlusIcon size={22} /></BoxBtn>
      </Columns>
    </Main>
  );
}

function TaskbarView() {
  return (
    <Taskbar>
      <StartBtn aria-label="Start"><svg width="24" height="24" viewBox="0 0 24 24" fill="#fff"><path d="M0 3.400l10-1.400v9.500H0zM11.200 1.800L24 0v11.500H11.200zM0 12.600h10v9.500L0 20.700zM11.200 12.600H24V24l-12.800-1.800z" /></svg></StartBtn>
      <TaskSearch>
        <svg width="24" height="24" viewBox="0 0 24 24" fill="none" stroke="#fff" strokeWidth="2" aria-hidden="true"><circle cx="15.500" cy="8.500" r="7.500" /><path d="M10 14L1 23" /></svg>
        <input aria-label="Type here to search" placeholder="Type here to search" />
      </TaskSearch>
      <Apps>
        <AppBtn aria-label="Outlook">
          <svg width="36" height="36" viewBox="0 0 36 36"><path d="M5 12L20 1c1-.6 2-.6 3 0l13 9v20H8z" fill="#1583d8" /><path d="M7 31l29-19v19c0 3-1.500 5-5 5H12c-3 0-5-2-5-5z" fill="#4dc4ff" /><path d="M16 22l18-11 2 1.500v7L20 27z" fill="#0c3f88" /><rect x="0" y="8" width="18" height="19" rx="2" fill="#0f6cbd" /><circle cx="9" cy="17.500" r="4.300" fill="none" stroke="#fff" strokeWidth="2.600" /></svg>
        </AppBtn>
        <AppBtn aria-label="Edge">
          <svg width="36" height="36" viewBox="0 0 36 36"><circle cx="18" cy="18" r="18" fill="#1673c9" /><path d="M1 15C3 5 10 0 18 0c10 0 18 7 18 16 0 5-4 8-9 8-4 0-5-2-4-4 3-6-2-10-8-10-6 0-11 2-14 5z" fill="#38c2d8" /><path d="M24 1c7 2 12 8 12 15 0 5-4 8-9 8-4 0-5-2-4-4 8-1 8-12 1-19z" fill="#5bd65f" /><path d="M10 22c0-5 3-9 7-9-2 6 2 13 11 13 2 0 4-.5 6-2-4 8-10 12-16 12-5-2-8-8-8-14z" fill="#0d4f9e" /><path d="M16 15c3-2 8-1 8 2-2 3-1 7 3 7s7-1 9-5l-1.500 6c-7 3-18-1-18.500-10z" fill="#14171d" /></svg>
        </AppBtn>
        <AppBtn $open aria-label="Chrome">
          <svg width="40" height="40" viewBox="0 0 40 40"><circle cx="18" cy="18" r="18" fill="#fbc116" /><path d="M18 18L2.400 9A18 18 0 0 1 33.600 9H18z" fill="#e33b2e" /><path d="M18 36A18 18 0 0 1 2.400 9l7.800 13.500L18 26l2 9.900z" fill="#25923f" /><circle cx="18" cy="18" r="8.600" fill="#fff" /><circle cx="18" cy="18" r="6.600" fill="#2f7de1" /><UserBadge x={28} y={27} /></svg>
        </AppBtn>
        <AppBtn aria-label="File Explorer">
          <svg width="34" height="28" viewBox="0 0 34 28"><path d="M1 2c0-1 .5-1 1-1h11l3 3h16c1 0 1 .5 1 1v22H1z" fill="#fbc94b" /><path d="M1 2c0-1 .5-1 1-1h11l3 3-3 3H1z" fill="#d99a13" /><path d="M7 28V17c0-1 .5-2 2-2h17c1.500 0 2 1 2 2v11h-6v-7h-9v7z" fill="#3a8fd8" /></svg>
        </AppBtn>
        <AppBtn aria-label="To Do">
          <svg width="38" height="30" viewBox="0 0 38 30"><path d="M1 15l7-7 9 9-2 12z" fill="#1f55b5" /><path d="M9 23L30 1l7 7-22 21z" fill="#3f93e8" /></svg>
        </AppBtn>
        <AppBtn aria-label="Remote Desktop">
          <svg width="34" height="34" viewBox="0 0 34 34"><path d="M9 2l23 5v18L9 19z" fill="#2196dc" stroke="#b5dbf0" strokeWidth="1.500" /><path d="M1 27l8-4 15 5-7 4z" fill="#e5e8ea" /><path d="M17 21l10 3-4 3-9-3z" fill="#b9bec2" /></svg>
        </AppBtn>
        <AppBtn $current aria-label="Brave"><BraveIcon size={30} /></AppBtn>
        <AppBtn $open aria-label="Visual Studio Code">
          <svg width="36" height="36" viewBox="0 0 36 36"><path d="M27 0l9 4v28l-9 4z" fill="#2aa8f5" /><path d="M4 10l-4 3 27 23 1-9z" fill="#1f8fdc" /><path d="M0 23l4 3L28 9l-1-9z" fill="#1070b3" /></svg>
        </AppBtn>
        <AppBtn $open aria-label="Screen Recorder">
          <svg width="40" height="38" viewBox="0 0 40 38"><rect x="0" y="2" width="36" height="30" rx="7" fill="#fff" /><rect x="4" y="6" width="28" height="22" rx="4" fill="none" stroke="#2268c9" strokeWidth="3" /><circle cx="18" cy="17" r="6" fill="#4a48b5" /><UserBadge x={28} y={26} /></svg>
        </AppBtn>
      </Apps>
      <Tray>
        <TrayBtn $w={40} aria-label="Help"><svg width="36" height="34" viewBox="0 0 36 34"><circle cx="17" cy="17" r="15" fill="#1c93d2" stroke="#fff" strokeWidth="3" /><path d="M12 12.500c0-7 10-7 10-.5 0 4-5 4-5 8.500M17 23v3" stroke="#fff" strokeWidth="3.500" fill="none" /><circle cx="28" cy="24" r="7" fill="#f0a516" /><path d="M28 20v8" stroke="#fff" strokeWidth="2" /></svg></TrayBtn>
        <TrayBtn $w={42} aria-label="Show hidden icons"><svg width="18" height="12" fill="none" stroke="#fff" strokeWidth="1.500"><path d="M1 10l8-8 8 8" /></svg></TrayBtn>
        <TrayBtn aria-label="Network"><svg width="20" height="20" viewBox="0 0 20 20" fill="none" stroke="#e0e0e0" strokeWidth="1.400"><path d="M1 19C2 10 9 2 19 1M6 19c0-7 5-12 13-13M11 19c0-4 3-8 8-8" /><circle cx="17.500" cy="17.500" r="1.800" fill="#fff" stroke="none" /></svg></TrayBtn>
        <TrayBtn aria-label="Battery"><svg width="24" height="14" fill="none" stroke="#fff" strokeWidth="1.500"><path d="M1 1h20v12H1zM23 5v4" /><path d="M3.500 3.500h12v7h-12z" fill="#fff" /></svg></TrayBtn>
        <TrayBtn aria-label="Ollama"><svg width="18" height="24" viewBox="0 0 18 24"><path d="M2 24V9L4 1l3 4h4l3-4 2 8v15z" fill="#fff" /><ellipse cx="9" cy="12.500" rx="3.200" ry="2.300" fill="none" stroke="#111" /><circle cx="4.500" cy="11" r=".9" /><circle cx="13.500" cy="11" r=".9" /></svg></TrayBtn>
        <TrayBtn aria-label="Audio"><svg width="24" height="24" fill="none" stroke="#fff" strokeWidth="1.700"><path d="M0 2h14M0 7h14M0 12h8M13 11h3l6-5v16l-6-5h-3z" /></svg></TrayBtn>
        <TrayBtn aria-label="Windows Security"><svg width="24" height="24" viewBox="0 0 24 24"><path d="M11 0c3 2 6 3 10 3v8c0 6-4 9-10 12C5 20 1 17 1 11V3c4 0 7-1 10-3z" fill="#fff" /><path d="M11 0v23M1 11h20" stroke="#14171d" strokeWidth="1.500" /><path d="M17 11l7 13H10z" fill="#f5a81c" /><path d="M17 15v5M17 21.500v1.500" stroke="#222" strokeWidth="1.600" /></svg></TrayBtn>
        <TrayBtn aria-label="Volume"><svg width="24" height="20" fill="none" stroke="#fff" strokeWidth="1.500"><path d="M1 7h4l5-5v16l-5-5H1z" /><path d="M13 7c1.500 2 1.500 4 0 6" /><path d="M16 4.500c3 3 3 8 0 11M19 2c4 5 4 11 0 16" stroke="#777" /></svg></TrayBtn>
        <Lang>ENG</Lang>
        <Clock>22:40<br />30-06-2025</Clock>
        <TrayBtn $w={60} aria-label="Action center"><svg width="24" height="24" fill="none" stroke="#fff" strokeWidth="1.600"><path d="M1 1h22v17h-7l-4 4.500L8 18H1z" /></svg></TrayBtn>
        <Peek />
      </Tray>
    </Taskbar>
  );
}

export default function App() {
  return (
    <Desktop>
      <Global />
      <BrowserTop />
      <Page>
        <JiraHeader />
        <Body>
          <SideNav />
          <BoardPage />
        </Body>
      </Page>
      <TaskbarView />
      <ShareBar>
        <svg width="9" height="17" fill="#c9cacc" aria-hidden="true"><path d="M0 0h2v17H0zM5 0h3v17H5z" /></svg>
        Screen Recorder is sharing your screen.
        <StopBtn>Stop sharing</StopBtn>
        <HideLink href="#">Hide</HideLink>
      </ShareBar>
      <Pointer>
        <svg width="18" height="28" viewBox="0 0 18 28" aria-hidden="true"><path d="M1 1v22l5-5 4 8.500 3.500-1.500-4-8.500H17z" fill="#fff" stroke="#1a1a1a" strokeWidth="1.300" /></svg>
      </Pointer>
    </Desktop>
  );
}
